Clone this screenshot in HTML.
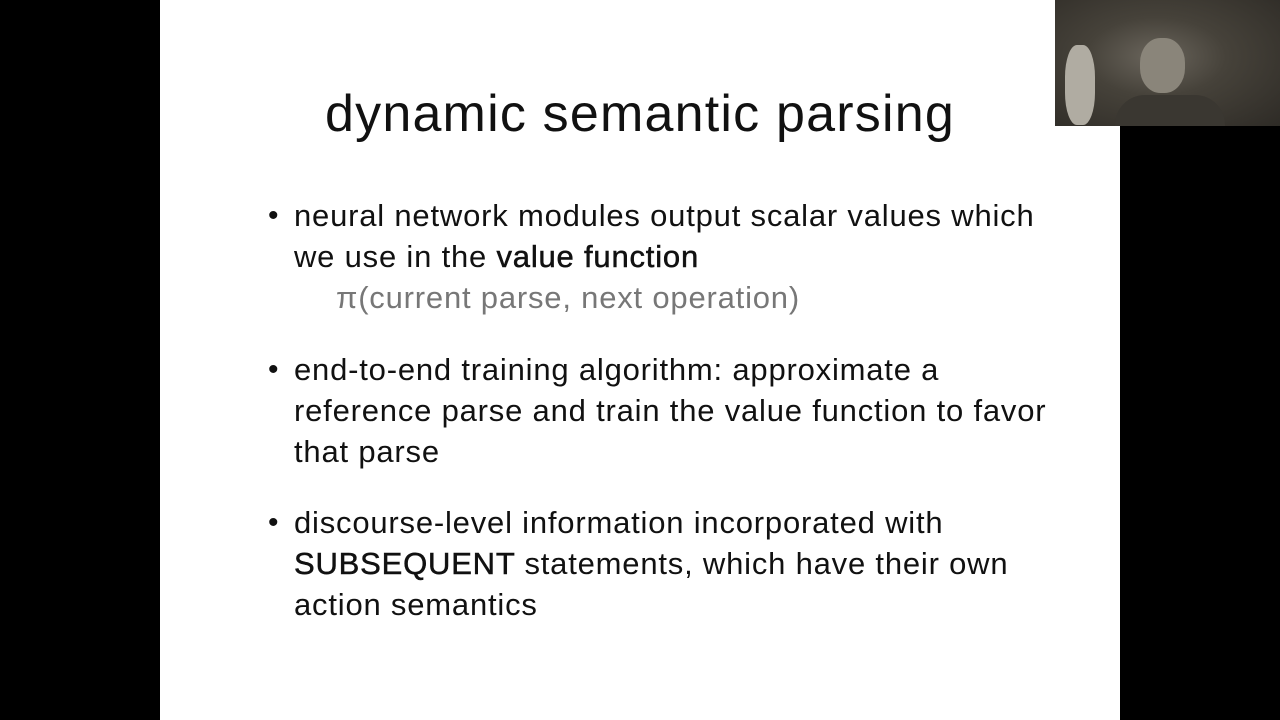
<!DOCTYPE html><html><head><style>
body{margin:0;width:1280px;height:720px;background:#000;position:relative;overflow:hidden;font-family:"Liberation Sans",sans-serif}
.slide{position:absolute;left:160px;top:0;width:960px;height:720px;background:#fff}
.t{position:absolute;white-space:nowrap;color:#111}
.title{font-size:52px;left:325px;top:84px;letter-spacing:1.2px}
.l{font-size:31px;left:294px;letter-spacing:0.8px}
.m{-webkit-text-stroke:0.5px #111}
.b{position:absolute;left:268px;font-size:30px}
.cam{position:absolute;left:1055px;top:0;width:225px;height:126px;background:radial-gradient(ellipse at 45% 45%,#6a655c 0,#46423a 40%,#2e2b26 100%)}
</style></head><body>
<div class="slide"></div>
<div class="t title">dynamic semantic parsing</div>
<div class="t b" style="top:199px">•</div>
<div class="t l" style="top:198px">neural network modules output scalar values which</div>
<div class="t l" style="top:239px">we use in the <span class="m">value function</span></div>
<div class="t l" style="top:280px;left:336px;color:#777">π(current parse, next operation)</div>
<div class="t b" style="top:353px">•</div>
<div class="t l" style="top:352px">end-to-end training algorithm: approximate a</div>
<div class="t l" style="top:393px">reference parse and train the value function to favor</div>
<div class="t l" style="top:434px">that parse</div>
<div class="t b" style="top:506px">•</div>
<div class="t l" style="top:505px">discourse-level information incorporated with</div>
<div class="t l" style="top:546px"><span class="m">SUBSEQUENT</span> statements, which have their own</div>
<div class="t l" style="top:587px">action semantics</div>
<div class="cam">
<div style="position:absolute;left:85px;top:38px;width:45px;height:55px;border-radius:45%;background:#8a857a"></div>
<div style="position:absolute;left:10px;top:45px;width:30px;height:80px;border-radius:40%;background:#b0aca2"></div>
<div style="position:absolute;left:60px;top:95px;width:110px;height:31px;border-radius:30px 30px 0 0;background:#3a3731"></div>
</div>
</body></html>
